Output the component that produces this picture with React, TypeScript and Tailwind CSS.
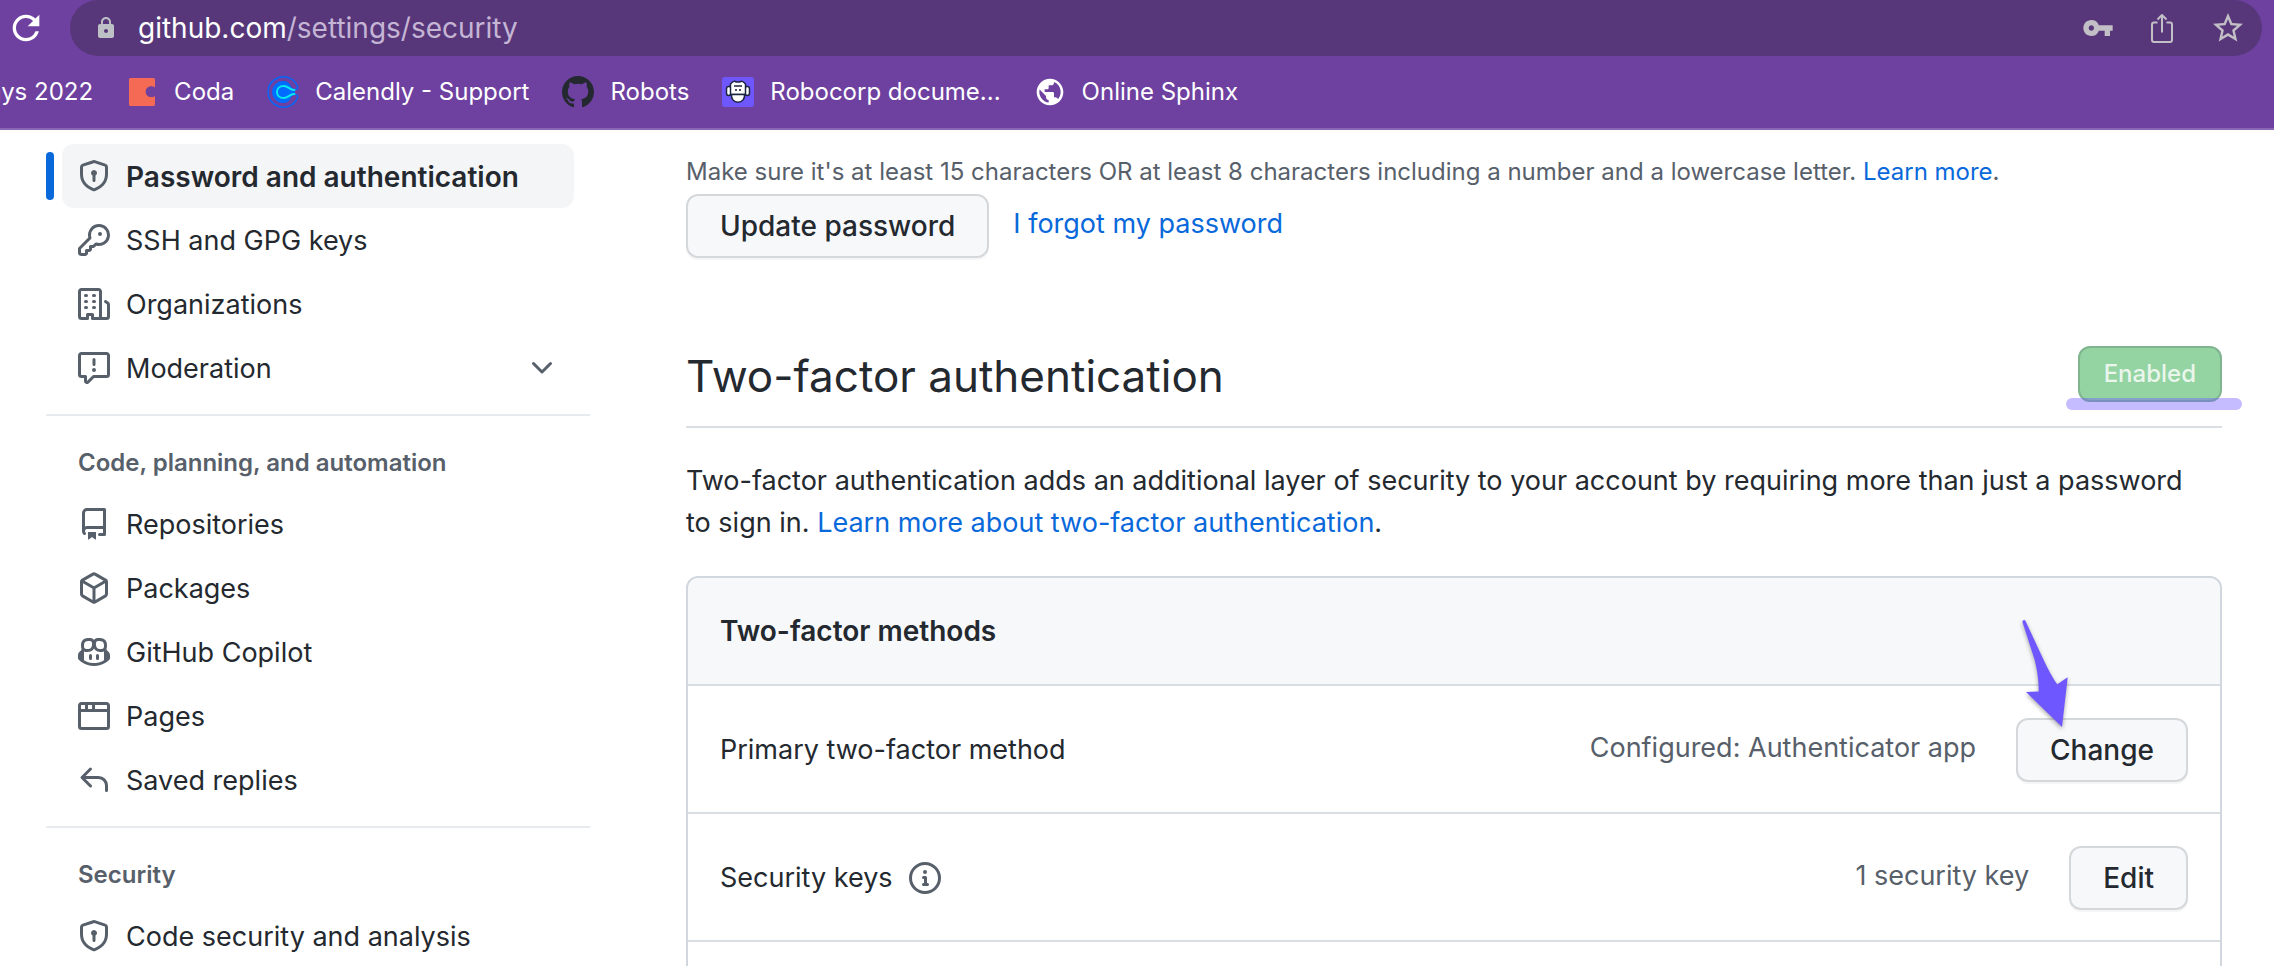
import type { ReactNode } from "react";
import { MdLock, MdOutlineStarBorder, MdPublic, MdRefresh, MdVpnKey } from "react-icons/md";

const paths = {
  shieldLock:
    "m8.533.133 5.25 1.68A1.75 1.75 0 0 1 15 3.48V7c0 1.566-.32 3.182-1.303 4.682-.983 1.498-2.585 2.813-5.032 3.855a1.697 1.697 0 0 1-1.33 0c-2.447-1.042-4.049-2.357-5.032-3.855C1.32 10.182 1 8.566 1 7V3.48a1.755 1.755 0 0 1 1.217-1.667l5.25-1.68a1.748 1.748 0 0 1 1.066 0Zm-.61 1.429.001.001-5.25 1.68a.251.251 0 0 0-.174.237V7c0 1.36.275 2.666 1.057 3.859.784 1.194 2.121 2.342 4.366 3.298a.196.196 0 0 0 .154 0c2.245-.957 3.582-2.103 4.366-3.297C13.225 9.666 13.5 8.358 13.5 7V3.48a.25.25 0 0 0-.174-.238l-5.25-1.68a.25.25 0 0 0-.153 0ZM9.5 6.5c0 .536-.286 1.032-.75 1.3v2.45a.75.75 0 0 1-1.5 0V7.8A1.5 1.5 0 1 1 9.5 6.5Z",
  key: "M10.5 0a5.499 5.499 0 1 1-1.288 10.848l-.932.932a.749.749 0 0 1-.53.22H7v.75a.749.749 0 0 1-.22.53l-.5.5a.749.749 0 0 1-.53.22H5v.75a.749.749 0 0 1-.22.53l-.5.5a.749.749 0 0 1-.53.22h-2A1.75 1.75 0 0 1 0 14.25v-2c0-.199.079-.389.22-.53l4.932-4.932A5.5 5.5 0 0 1 10.5 0Zm-4 5.5c-.001.431.069.86.205 1.269a.75.75 0 0 1-.181.768L1.5 12.56v1.69c0 .138.112.25.25.25h1.69l.06-.06v-1.19a.75.75 0 0 1 .75-.75h1.19l.06-.06v-1.19a.75.75 0 0 1 .75-.75h1.19l1.023-1.025a.75.75 0 0 1 .768-.18A4 4 0 1 0 6.5 5.5ZM11 6a1 1 0 1 1 0-2 1 1 0 0 1 0 2Z",
  organization:
    "M1.75 16A1.75 1.75 0 0 1 0 14.25V1.75C0 .784.784 0 1.75 0h8.5C11.216 0 12 .784 12 1.75v12.5c0 .085-.006.168-.018.25h2.268a.25.25 0 0 0 .25-.25V8.285a.25.25 0 0 0-.111-.208l-1.055-.703a.749.749 0 1 1 .832-1.248l1.055.703c.487.325.779.871.779 1.456v5.965A1.75 1.75 0 0 1 14.25 16h-3.5a.766.766 0 0 1-.197-.026c-.099.017-.2.026-.303.026h-3a.75.75 0 0 1-.75-.75V14h-1v1.25a.75.75 0 0 1-.75.75Zm-.25-1.75c0 .138.112.25.25.25H4v-1.25a.75.75 0 0 1 .75-.75h2.5a.75.75 0 0 1 .75.75v1.25h2.25a.25.25 0 0 0 .25-.25V1.75a.25.25 0 0 0-.25-.25h-8.5a.25.25 0 0 0-.25.25ZM3.75 6h.5a.75.75 0 0 1 0 1.5h-.5a.75.75 0 0 1 0-1.5ZM3 3.75A.75.75 0 0 1 3.75 3h.5a.75.75 0 0 1 0 1.5h-.5A.75.75 0 0 1 3 3.75Zm4 3A.75.75 0 0 1 7.75 6h.5a.75.75 0 0 1 0 1.5h-.5A.75.75 0 0 1 7 6.75ZM7.75 3h.5a.75.75 0 0 1 0 1.5h-.5a.75.75 0 0 1 0-1.5ZM3 9.75A.75.75 0 0 1 3.75 9h.5a.75.75 0 0 1 0 1.5h-.5A.75.75 0 0 1 3 9.75ZM7.75 9h.5a.75.75 0 0 1 0 1.5h-.5a.75.75 0 0 1 0-1.5Z",
  report:
    "M0 1.75C0 .784.784 0 1.75 0h12.5C15.216 0 16 .784 16 1.75v9.5A1.75 1.75 0 0 1 14.25 13H8.06l-2.573 2.573A1.458 1.458 0 0 1 3 14.543V13H1.75A1.75 1.75 0 0 1 0 11.25Zm1.75-.25a.25.25 0 0 0-.25.25v9.5c0 .138.112.25.25.25h2a.75.75 0 0 1 .75.75v2.19l2.72-2.72a.749.749 0 0 1 .53-.22h6.5a.25.25 0 0 0 .25-.25v-9.5a.25.25 0 0 0-.25-.25Zm7 2.25v2.5a.75.75 0 0 1-1.5 0v-2.5a.75.75 0 0 1 1.5 0ZM9 9a1 1 0 1 1-2 0 1 1 0 0 1 2 0Z",
  repo: "M2 2.5A2.5 2.5 0 0 1 4.5 0h8.75a.75.75 0 0 1 .75.75v12.5a.75.75 0 0 1-.75.75h-2.5a.75.75 0 0 1 0-1.5h1.75v-2h-8a1 1 0 0 0-.714 1.7.75.75 0 1 1-1.072 1.05A2.495 2.495 0 0 1 2 11.5Zm10.5-1h-8a1 1 0 0 0-1 1v6.708A2.486 2.486 0 0 1 4.5 9h8ZM5 12.25a.25.25 0 0 1 .25-.25h3.5a.25.25 0 0 1 .25.25v3.25a.25.25 0 0 1-.4.2l-1.45-1.087a.249.249 0 0 0-.3 0L5.4 15.7a.25.25 0 0 1-.4-.2Z",
  package:
    "m8.878.392 5.25 3.045c.54.314.872.89.872 1.514v6.098a1.75 1.75 0 0 1-.872 1.514l-5.25 3.045a1.75 1.75 0 0 1-1.756 0l-5.25-3.045A1.75 1.75 0 0 1 1 11.049V4.951c0-.624.332-1.201.872-1.514L7.122.392a1.75 1.75 0 0 1 1.756 0ZM7.875 1.69l-4.63 2.685L8 7.133l4.755-2.758-4.63-2.685a.248.248 0 0 0-.25 0ZM2.5 5.677v5.372c0 .09.047.171.125.216l4.625 2.683V8.432Zm6.25 8.271 4.625-2.683a.25.25 0 0 0 .125-.216V5.677L8.75 8.432Z",
  copilot:
    "M7.998 15.035c-4.562 0-7.873-2.914-7.998-3.749V9.338c.085-.628.677-1.686 1.588-2.065.013-.07.024-.143.036-.218.029-.183.06-.384.126-.612-.201-.508-.254-1.084-.254-1.656 0-.87.128-1.769.693-2.484.579-.733 1.494-1.124 2.724-1.261 1.206-.134 2.262.034 2.944.765.05.053.096.108.139.165.044-.057.094-.112.143-.165.682-.731 1.738-.899 2.944-.765 1.23.137 2.145.528 2.724 1.261.566.715.693 1.614.693 2.484 0 .572-.053 1.148-.254 1.656.066.228.098.429.126.612.012.076.024.148.037.218.924.385 1.522 1.471 1.591 2.095v1.872c0 .766-3.351 3.795-8.002 3.795Zm0-1.485c2.28 0 4.584-1.11 5.002-1.433V7.862l-.023-.116c-.49.21-1.075.291-1.727.291-1.146 0-2.059-.327-2.71-.991A3.222 3.222 0 0 1 8 6.303a3.24 3.24 0 0 1-.544.743c-.65.664-1.563.991-2.71.991-.652 0-1.236-.081-1.727-.291l-.023.116v4.255c.419.323 2.722 1.433 5.002 1.433ZM6.762 2.83c-.193-.206-.637-.413-1.682-.297-1.019.113-1.479.404-1.713.7-.247.312-.369.789-.369 1.554 0 .793.129 1.171.308 1.371.162.181.519.379 1.442.379.853 0 1.339-.235 1.638-.54.315-.322.527-.827.617-1.553.117-.935-.037-1.395-.241-1.614Zm4.155-.297c-1.044-.116-1.488.091-1.681.297-.204.219-.359.679-.242 1.614.091.726.303 1.231.618 1.553.299.305.784.54 1.638.54.922 0 1.28-.198 1.442-.379.179-.2.308-.578.308-1.371 0-.765-.123-1.242-.37-1.554-.233-.296-.693-.587-1.713-.7ZM6.25 9.037a.75.75 0 0 1 .75.75v1.501a.75.75 0 0 1-1.5 0V9.787a.75.75 0 0 1 .75-.75Zm4.25.75v1.501a.75.75 0 0 1-1.5 0V9.787a.75.75 0 0 1 1.5 0Z",
  browser:
    "M0 2.75C0 1.784.784 1 1.75 1h12.5c.966 0 1.75.784 1.75 1.75v10.5A1.75 1.75 0 0 1 14.25 15H1.75A1.75 1.75 0 0 1 0 13.25ZM14.5 6h-13v7.25c0 .138.112.25.25.25h12.5a.25.25 0 0 0 .25-.25Zm-6-3.5v2h6V2.75a.25.25 0 0 0-.25-.25ZM5 2.5v2h2v-2Zm-3.25 0a.25.25 0 0 0-.25.25V4.5h2v-2Z",
  reply:
    "M6.78 1.97a.75.75 0 0 1 0 1.06L3.81 6h6.44A4.75 4.75 0 0 1 15 10.75v2.5a.75.75 0 0 1-1.5 0v-2.5a3.25 3.25 0 0 0-3.25-3.25H3.81l2.97 2.97a.749.749 0 0 1-.326 1.275.749.749 0 0 1-.734-.215L1.47 7.28a.75.75 0 0 1 0-1.06l4.25-4.25a.75.75 0 0 1 1.06 0Z",
  chevronDown:
    "M12.78 5.22a.749.749 0 0 1 0 1.06l-4.25 4.25a.749.749 0 0 1-1.06 0L3.22 6.28a.749.749 0 1 1 1.06-1.06L8 8.939l3.72-3.719a.749.749 0 0 1 1.06 0Z",
  info: "M0 8a8 8 0 1 1 16 0A8 8 0 0 1 0 8Zm8-6.5a6.5 6.5 0 1 0 0 13 6.5 6.5 0 0 0 0-13ZM6.5 7.75A.75.75 0 0 1 7.25 7h1a.75.75 0 0 1 .75.75v2.75h.25a.75.75 0 0 1 0 1.5h-2a.75.75 0 0 1 0-1.5h.25v-2h-.25a.75.75 0 0 1-.75-.75ZM8 6a1 1 0 1 1 0-2 1 1 0 0 1 0 2Z",
  github:
    "M8 0C3.58 0 0 3.58 0 8c0 3.54 2.29 6.53 5.47 7.59.4.07.55-.17.55-.38 0-.19-.01-.82-.01-1.49-2.01.37-2.53-.49-2.69-.94-.09-.23-.48-.94-.82-1.13-.28-.15-.68-.52-.01-.53.63-.01 1.08.58 1.23.82.72 1.21 1.87.87 2.33.66.07-.52.28-.87.51-1.07-1.78-.2-3.64-.89-3.64-3.95 0-.87.31-1.59.82-2.15-.08-.2-.36-1.02.08-2.12 0 0 .67-.21 2.2.82.64-.18 1.32-.27 2-.27s1.36.09 2 .27c1.53-1.04 2.2-.82 2.2-.82.44 1.1.16 1.92.08 2.12.51.56.82 1.27.82 2.15 0 3.07-1.87 3.75-3.65 3.95.29.25.54.73.54 1.48 0 1.07-.01 1.93-.01 2.2 0 .21.15.46.55.38A8.01 8.01 0 0 0 16 8c0-4.42-3.58-8-8-8z",
};

type IconName = keyof typeof paths;

function Octicon({ name, className }: { name: IconName; className?: string }) {
  return (
    <svg viewBox="0 0 16 16" fill="currentColor" aria-hidden="true" className={`size-8 shrink-0 ${className ?? ""}`}>
      <path d={paths[name]} />
    </svg>
  );
}

function CodaLogo() {
  return (
    <svg viewBox="0 0 32 32" className="size-8 shrink-0" aria-hidden="true">
      <path
        fill="#f46a54"
        d="M4.500 2H27.500a1.500 1.500 0 0 1 1.500 1.500V11.500c-1-.8-2.200-1.200-3.700-1.200-3.300 0-5.600 2.300-5.600 5.400s2.300 5.400 5.600 5.400c1.500 0 2.700-.4 3.700-1.200v8.600a1.500 1.500 0 0 1-1.500 1.500H4.500A1.500 1.500 0 0 1 3 28.500v-25A1.500 1.500 0 0 1 4.500 2Z"
      />
    </svg>
  );
}

function CalendlyLogo() {
  return (
    <svg viewBox="0 0 32 32" className="size-8 shrink-0" fill="none" aria-hidden="true">
      <path
        stroke="#0a66f5"
        strokeWidth="1.600"
        strokeLinecap="round"
        d="M28.500 13.500c1.500-.4 2.500-1.200 2.200-2.500A15.200 15.200 0 1 0 30.700 21c.3-1.300-.7-2.100-2.200-2.500"
      />
      <path fill="#006bff" d="M16 5c5.500 0 7.500 3 8.500 6.500l3.500 2v5l-3.500 2C23.500 24 21.500 27 16 27A11 11 0 0 1 16 5Z" />
      <path
        stroke="#0ae8f0"
        strokeWidth="2"
        strokeLinecap="round"
        d="M27.500 14C22.500 14.500 22 10 16.500 10c-3.800 0-6.500 2.600-6.500 6s2.700 6 6.500 6c5.500 0 6-4.500 11-4"
      />
    </svg>
  );
}

function RobocorpLogo() {
  return (
    <svg viewBox="0 0 32 32" className="size-8 shrink-0" aria-hidden="true">
      <rect y="1" width="32" height="30" rx="3" fill="#6f57ff" />
      <g stroke="#1b2440" strokeWidth="1.500" fill="#fff">
        <rect x="4.500" y="10.500" width="4.500" height="9" rx="2.200" />
        <rect x="23" y="10.500" width="4.500" height="9" rx="2.200" />
        <path d="M10 6.500c1.500-1.500 3-1.500 4-.6h4c1-.9 2.500-.9 4 .6 1.500 1 2 2.500 1.500 4V18.500h-15V10.500c-.5-1.500 0-3 1.500-4Z" />
        <path d="M9.500 18.500h13c.5 4-2.200 7.700-6.500 7.700s-7-3.700-6.500-7.700Z" />
        <path d="M12 10h8" fill="none" />
      </g>
      <rect x="13.200" y="13" width="1.600" height="2" fill="#1b2440" />
      <rect x="17.200" y="13" width="1.600" height="2" fill="#1b2440" />
    </svg>
  );
}

function ShareIcon() {
  return (
    <svg viewBox="0 0 32 32" className="size-8" fill="none" stroke="currentColor" strokeWidth="2" aria-hidden="true">
      <path d="M11.500 10.500H8a2 2 0 0 0-2 2V28a2 2 0 0 0 2 2h16a2 2 0 0 0 2-2V12.500a2 2 0 0 0-2-2h-3.500" />
      <path d="M16 20.500V3.500M11.500 7.500 16 3l4.500 4.500" strokeLinejoin="round" />
    </svg>
  );
}

function Bookmark({ icon, children }: { icon: ReactNode; children: ReactNode }) {
  return (
    <a href="#" className="flex shrink-0 items-center gap-4">
      {icon}
      <span>{children}</span>
    </a>
  );
}

function BrowserBar() {
  return (
    <header className="shrink-0 border-b-2 border-[#8c68b4] bg-[#6e40a0] text-white">
      <div className="flex items-center gap-6 pr-3 pl-1.5">
        <button type="button" aria-label="Reload">
          <MdRefresh className="size-10" />
        </button>
        <div className="flex h-14 flex-1 items-center rounded-full bg-[#57377a] pr-4 pl-6">
          <MdLock className="size-6 text-[#bdc1c6]" />
          <div className="ml-5 flex-1 text-[28px]">
            github.com<span className="text-[#c5b5d5]">/settings/security</span>
          </div>
          <div className="flex items-center gap-8 text-[#c3bfc7]">
            <button type="button" aria-label="Passwords">
              <MdVpnKey className="size-8" />
            </button>
            <button type="button" aria-label="Share">
              <ShareIcon />
            </button>
            <button type="button" aria-label="Bookmark this page">
              <MdOutlineStarBorder className="size-9" />
            </button>
          </div>
        </div>
      </div>
      <nav
        aria-label="Bookmarks"
        className="flex h-[72px] items-center gap-[33px] overflow-hidden text-2xl whitespace-nowrap"
      >
        <a href="#" className="-ml-3 shrink-0">
          ays 2022
        </a>
        <Bookmark icon={<CodaLogo />}>Coda</Bookmark>
        <Bookmark icon={<CalendlyLogo />}>Calendly - Support</Bookmark>
        <Bookmark icon={<Octicon name="github" className="text-[#24292f]" />}>Robots</Bookmark>
        <Bookmark icon={<RobocorpLogo />}>Robocorp docume...</Bookmark>
        <Bookmark icon={<MdPublic className="size-8 shrink-0" />}>Online Sphinx</Bookmark>
      </nav>
    </header>
  );
}

function NavItem({ icon, label, current, expandable }: { icon: IconName; label: string; current?: boolean; expandable?: boolean }) {
  return (
    <li className="flex items-center gap-2">
      <span className={current ? "h-12 w-2 rounded-full bg-[#0969da]" : "w-2"} />
      <a
        href="#"
        aria-current={current ? "page" : undefined}
        className={`mr-4 flex h-16 flex-1 items-center gap-4 rounded-xl px-4 ${current ? "bg-[#f4f5f7] text-[28px] font-semibold" : ""}`}
      >
        <Octicon name={icon} className="text-[#57606a]" />
        <span className="flex-1 pt-0.5">{label}</span>
        {expandable && <Octicon name="chevronDown" className="text-[#57606a]" />}
      </a>
    </li>
  );
}

function NavHeading({ children }: { children: ReactNode }) {
  return (
    <h3 className="mt-3.5 flex h-[78px] items-center border-t-2 border-[#e7ebef] pt-[18px] pl-8 text-2xl font-semibold text-[#57606a]">
      {children}
    </h3>
  );
}

function Sidebar() {
  return (
    <nav aria-label="Settings" className="w-[544px] shrink-0">
      <ul>
        <NavItem icon="shieldLock" label="Password and authentication" current />
        <NavItem icon="key" label="SSH and GPG keys" />
        <NavItem icon="organization" label="Organizations" />
        <NavItem icon="report" label="Moderation" expandable />
      </ul>
      <NavHeading>Code, planning, and automation</NavHeading>
      <ul>
        <NavItem icon="repo" label="Repositories" />
        <NavItem icon="package" label="Packages" />
        <NavItem icon="copilot" label="GitHub Copilot" />
        <NavItem icon="browser" label="Pages" />
        <NavItem icon="reply" label="Saved replies" />
      </ul>
      <NavHeading>Security</NavHeading>
      <ul>
        <NavItem icon="shieldLock" label="Code security and analysis" />
      </ul>
    </nav>
  );
}

function Button({ children }: { children: ReactNode }) {
  return (
    <button
      type="button"
      className="h-16 shrink-0 rounded-xl border-2 border-[#d5d8da] bg-[#f6f8fa] px-8 text-[28px] font-medium shadow-[0_2px_0_rgba(31,35,40,0.04)]"
    >
      {children}
    </button>
  );
}

function Link({ children }: { children: ReactNode }) {
  return (
    <a href="#" className="text-[#0969da]">
      {children}
    </a>
  );
}

function PointerArrow() {
  return (
    <svg
      viewBox="0 0 48 110"
      aria-hidden="true"
      className="pointer-events-none absolute bottom-[54px] left-1.5 h-[110px] w-12 drop-shadow-[0_2px_2px_rgba(0,0,0,0.35)]"
    >
      <path
        fill="#6f57ff"
        d="M.3 3.500Q1.500 1 3.300 2.500L17.700 33.500C23 45 29 58 35.300 66.300L45.700 59.300 40 109 4 74 16.700 73.500C16.700 62 15.500 54 12.700 42Z"
      />
    </svg>
  );
}

function MethodRow({ label, status, children }: { label: ReactNode; status: string; children: ReactNode }) {
  return (
    <li className="flex h-32 items-center border-t-2 border-[#d8dee4] px-8 pt-0.5">
      <div className="flex flex-1 items-center gap-4">{label}</div>
      <span className="mr-10 mb-1 text-[#57606a]">{status}</span>
      {children}
    </li>
  );
}

export default function App() {
  return (
    <div className="flex h-screen flex-col overflow-hidden bg-white font-['Inter',sans-serif] text-[27px] text-[#24292f]">
      <BrowserBar />
      <div className="flex min-h-0 flex-1 gap-24 pt-3.5 pr-[52px] pl-[46px]">
        <Sidebar />
        <main className="min-w-0 flex-1">
          <p className="pt-2 pb-0.5 text-2xl leading-10 text-[#57606a]">
            Make sure it's at least 15 characters OR at least 8 characters including a number and a lowercase letter.{" "}
            <Link>Learn more</Link>.
          </p>
          <div className="flex items-center gap-6">
            <Button>Update password</Button>
            <span className="mb-1">
              <Link>I forgot my password</Link>
            </span>
          </div>
          <div className="mt-20 flex h-[90px] items-start justify-between border-b-2 border-[#d8dee4]">
            <h2 className="pt-2 text-[44px] leading-[60px]">Two-factor authentication</h2>
            <div className="relative mt-2">
              <button
                type="button"
                disabled
                className="h-14 rounded-xl border-2 border-[#80b48f] bg-[#94d3a2] px-6 text-2xl font-medium text-[#eaf6ec]"
              >
                Enabled
              </button>
              <span className="absolute -right-5 -bottom-2 -left-3 h-3 rounded-full bg-[#6f57ff]/40" />
            </div>
          </div>
          <p className="mt-8 pr-5 leading-[42px]">
            Two-factor authentication adds an additional layer of security to your account by requiring more than just a
            password to sign in. <Link>Learn more about two-factor authentication</Link>.
          </p>
          <section className="mt-8 rounded-xl border-2 border-[#d0d7de]">
            <h3 className="flex h-[106px] items-center rounded-t-xl bg-[#f6f8fa] px-8 text-[28px] font-semibold">
              Two-factor methods
            </h3>
            <ul>
              <MethodRow label="Primary two-factor method" status="Configured: Authenticator app">
                <div className="relative">
                  <Button>Change</Button>
                  <PointerArrow />
                </div>
              </MethodRow>
              <MethodRow
                label={
                  <>
                    Security keys
                    <Octicon name="info" className="text-[#57606a]" />
                  </>
                }
                status="1 security key"
              >
                <Button>Edit</Button>
              </MethodRow>
              <li className="h-32 border-t-2 border-[#d8dee4]" />
            </ul>
          </section>
        </main>
      </div>
    </div>
  );
}
